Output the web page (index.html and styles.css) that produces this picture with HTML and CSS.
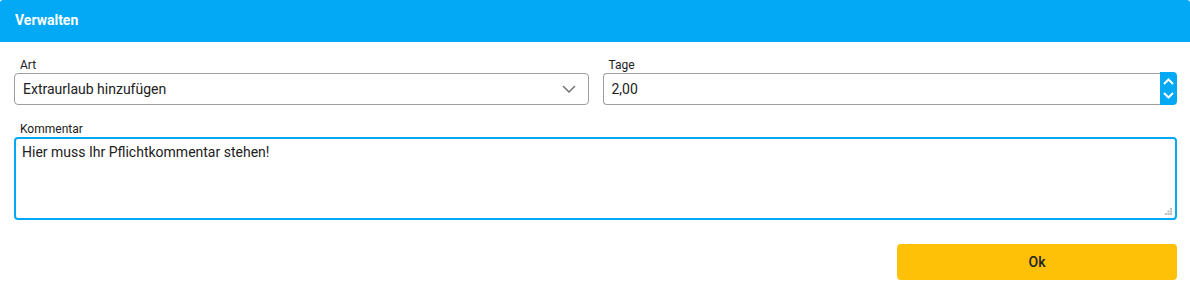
FILE: index.html
```html
<!DOCTYPE html>
<html lang="de">
<head>
	<meta charset="utf-8"/>
	<title>Verwalten</title>
	<link rel="stylesheet" href="styles.css">
</head>

<body>
	<div class="dialog">
		<div class="dialog-header">Verwalten</div>
		<div class="dialog-body">
			<div class="row">
				<div class="field">
					<label class="field-label">Art</label>
					<div class="select">
						<span class="select-value">Extraurlaub hinzufügen</span>
						<svg class="select-arrow" width="14" height="8" viewBox="0 0 14 8">
							<path d="M1 1 L7 7 L13 1" fill="none" stroke="#757575" stroke-width="1.5"/>
						</svg>
					</div>
				</div>
				<div class="field">
					<label class="field-label">Tage</label>
					<div class="number">
						<input type="text" class="number-input" value="2,00"/>
						<div class="spinner">
							<svg width="11" height="7" viewBox="0 0 11 7">
								<path d="M1 6 L5.5 1.5 L10 6" fill="none" stroke="#fff" stroke-width="2"/>
							</svg>
							<svg width="11" height="7" viewBox="0 0 11 7">
								<path d="M1 1 L5.5 5.5 L10 1" fill="none" stroke="#fff" stroke-width="2"/>
							</svg>
						</div>
					</div>
				</div>
			</div>

			<div class="field">
				<label class="field-label">Kommentar</label>
				<div class="comment">
					<textarea class="comment-input">Hier muss Ihr Pflichtkommentar stehen!</textarea>
					<svg class="grip" width="7" height="7" viewBox="0 0 7 7">
						<rect x="5" y="0" width="2" height="2" fill="#bdbdbd"/>
						<rect x="2.5" y="2.5" width="2" height="2" fill="#bdbdbd"/>
						<rect x="5" y="2.5" width="2" height="2" fill="#bdbdbd"/>
						<rect x="0" y="5" width="2" height="2" fill="#bdbdbd"/>
						<rect x="2.5" y="5" width="2" height="2" fill="#bdbdbd"/>
						<rect x="5" y="5" width="2" height="2" fill="#bdbdbd"/>
					</svg>
				</div>
			</div>

			<div class="actions">
				<button class="btn-ok">Ok</button>
			</div>
		</div>
	</div>
</body>
</html>
```

FILE: styles.css
```css
* {
	box-sizing: border-box;
}
body {
	margin: 0;
	font-family: Roboto, 'Liberation Sans', sans-serif;
	font-size: 14px;
	color: #212121;
	background: #fff;
}
.dialog {
	border-radius: 3px;
	overflow: hidden;
	background: #fff;
}
.dialog-header {
	height: 42px;
	line-height: 40px;
	padding: 0 15px;
	background-color: #03A9F4;
	color: #fff;
	font-weight: bold;
	font-size: 14px;
}
.dialog-body {
	padding: 16px 13px 0 14px;
}
.row {
	display: grid;
	grid-template-columns: 1fr 1fr;
	column-gap: 14px;
	margin-bottom: 17px;
}
.field-label {
	display: block;
	height: 15px;
	line-height: 15px;
	padding-left: 6px;
	font-size: 12px;
	color: #212121;
}
.select {
	display: flex;
	align-items: center;
	justify-content: space-between;
	height: 32px;
	padding: 0 12px 0 8px;
	border: 1px solid #9e9e9e;
	border-radius: 4px;
}
.select-value {
	font-size: 14px;
}
.number {
	display: flex;
	height: 32px;
}
.number-input {
	flex: 1;
	min-width: 0;
	height: 32px;
	padding: 0 8px;
	border: 1px solid #9e9e9e;
	border-right: 0;
	border-radius: 4px 0 0 4px;
	font-family: inherit;
	font-size: 14px;
	color: #212121;
	outline: 0;
}
.spinner {
	width: 17px;
	height: 33px;
	margin-top: -1px;
	display: flex;
	flex-direction: column;
	align-items: center;
	justify-content: space-around;
	padding: 3px 0;
	background-color: #03A9F4;
	border-radius: 0 4px 4px 0;
}
.comment {
	position: relative;
}
.comment-input {
	display: block;
	width: 100%;
	height: 83px;
	padding: 5px 6px;
	border: 2px solid #03A9F4;
	border-radius: 4px;
	font-family: inherit;
	font-size: 14px;
	color: #212121;
	resize: none;
	outline: 0;
}
.grip {
	position: absolute;
	right: 5px;
	bottom: 5px;
}
.actions {
	display: flex;
	justify-content: flex-end;
	margin-top: 24px;
}
.btn-ok {
	width: 280px;
	height: 36px;
	border: 0;
	border-radius: 4px;
	background-color: #FFC107;
	font-family: inherit;
	font-size: 14px;
	font-weight: 500;
	color: #212121;
}
```
